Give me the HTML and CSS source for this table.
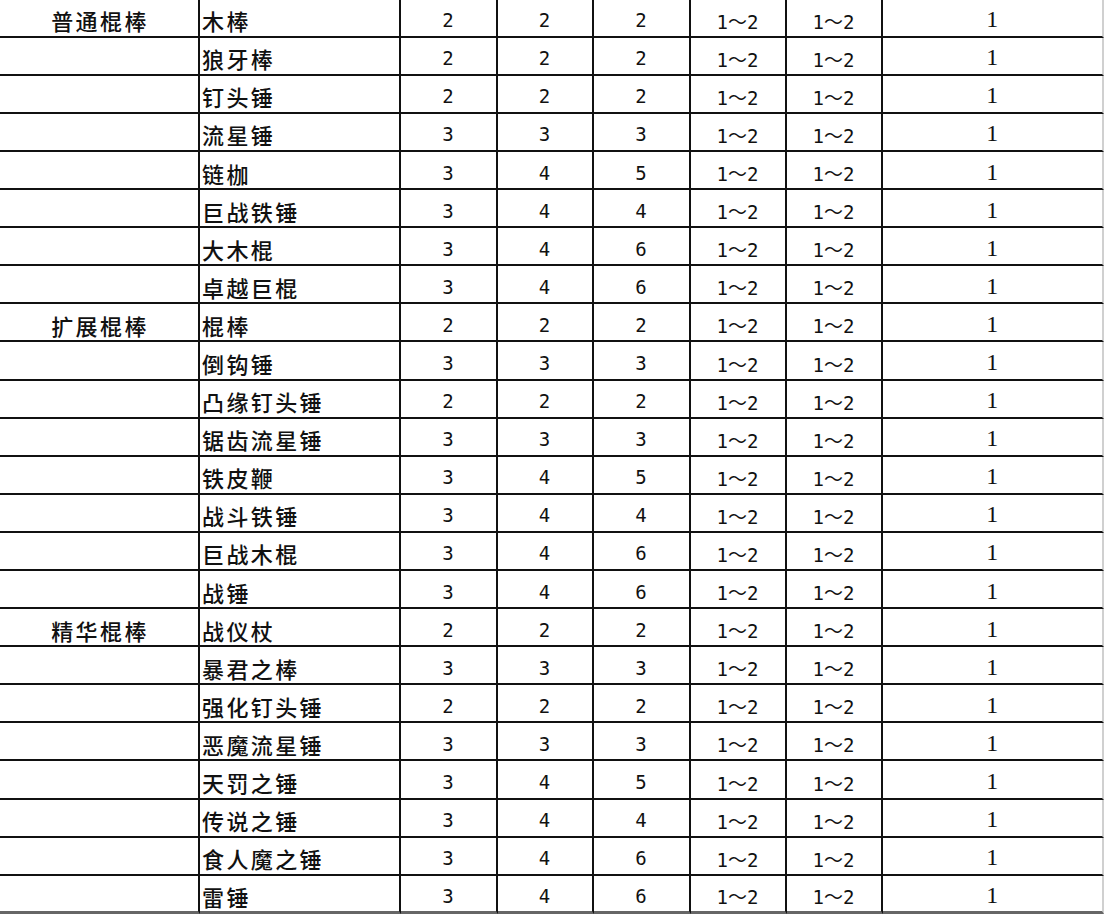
FILE: index.html
```html
<!DOCTYPE html>
<html lang="zh-CN">
<head>
<meta charset="utf-8">
<title>棍棒</title>
<link rel="stylesheet" href="styles.css">
</head>
<body>
<div class="sheet">
  <div class="c cat">普通棍棒</div><div class="c name">木棒</div><div class="c num">2</div><div class="c num">2</div><div class="c num">2</div><div class="c num">1～2</div><div class="c num">1～2</div><div class="c num last">1</div>
  <div class="c cat"></div><div class="c name">狼牙棒</div><div class="c num">2</div><div class="c num">2</div><div class="c num">2</div><div class="c num">1～2</div><div class="c num">1～2</div><div class="c num last">1</div>
  <div class="c cat"></div><div class="c name">钉头锤</div><div class="c num">2</div><div class="c num">2</div><div class="c num">2</div><div class="c num">1～2</div><div class="c num">1～2</div><div class="c num last">1</div>
  <div class="c cat"></div><div class="c name">流星锤</div><div class="c num">3</div><div class="c num">3</div><div class="c num">3</div><div class="c num">1～2</div><div class="c num">1～2</div><div class="c num last">1</div>
  <div class="c cat"></div><div class="c name">链枷</div><div class="c num">3</div><div class="c num">4</div><div class="c num">5</div><div class="c num">1～2</div><div class="c num">1～2</div><div class="c num last">1</div>
  <div class="c cat"></div><div class="c name">巨战铁锤</div><div class="c num">3</div><div class="c num">4</div><div class="c num">4</div><div class="c num">1～2</div><div class="c num">1～2</div><div class="c num last">1</div>
  <div class="c cat"></div><div class="c name">大木棍</div><div class="c num">3</div><div class="c num">4</div><div class="c num">6</div><div class="c num">1～2</div><div class="c num">1～2</div><div class="c num last">1</div>
  <div class="c cat"></div><div class="c name">卓越巨棍</div><div class="c num">3</div><div class="c num">4</div><div class="c num">6</div><div class="c num">1～2</div><div class="c num">1～2</div><div class="c num last">1</div>
  <div class="c cat">扩展棍棒</div><div class="c name">棍棒</div><div class="c num">2</div><div class="c num">2</div><div class="c num">2</div><div class="c num">1～2</div><div class="c num">1～2</div><div class="c num last">1</div>
  <div class="c cat"></div><div class="c name">倒钩锤</div><div class="c num">3</div><div class="c num">3</div><div class="c num">3</div><div class="c num">1～2</div><div class="c num">1～2</div><div class="c num last">1</div>
  <div class="c cat"></div><div class="c name">凸缘钉头锤</div><div class="c num">2</div><div class="c num">2</div><div class="c num">2</div><div class="c num">1～2</div><div class="c num">1～2</div><div class="c num last">1</div>
  <div class="c cat"></div><div class="c name">锯齿流星锤</div><div class="c num">3</div><div class="c num">3</div><div class="c num">3</div><div class="c num">1～2</div><div class="c num">1～2</div><div class="c num last">1</div>
  <div class="c cat"></div><div class="c name">铁皮鞭</div><div class="c num">3</div><div class="c num">4</div><div class="c num">5</div><div class="c num">1～2</div><div class="c num">1～2</div><div class="c num last">1</div>
  <div class="c cat"></div><div class="c name">战斗铁锤</div><div class="c num">3</div><div class="c num">4</div><div class="c num">4</div><div class="c num">1～2</div><div class="c num">1～2</div><div class="c num last">1</div>
  <div class="c cat"></div><div class="c name">巨战木棍</div><div class="c num">3</div><div class="c num">4</div><div class="c num">6</div><div class="c num">1～2</div><div class="c num">1～2</div><div class="c num last">1</div>
  <div class="c cat"></div><div class="c name">战锤</div><div class="c num">3</div><div class="c num">4</div><div class="c num">6</div><div class="c num">1～2</div><div class="c num">1～2</div><div class="c num last">1</div>
  <div class="c cat">精华棍棒</div><div class="c name">战仪杖</div><div class="c num">2</div><div class="c num">2</div><div class="c num">2</div><div class="c num">1～2</div><div class="c num">1～2</div><div class="c num last">1</div>
  <div class="c cat"></div><div class="c name">暴君之棒</div><div class="c num">3</div><div class="c num">3</div><div class="c num">3</div><div class="c num">1～2</div><div class="c num">1～2</div><div class="c num last">1</div>
  <div class="c cat"></div><div class="c name">强化钉头锤</div><div class="c num">2</div><div class="c num">2</div><div class="c num">2</div><div class="c num">1～2</div><div class="c num">1～2</div><div class="c num last">1</div>
  <div class="c cat"></div><div class="c name">恶魔流星锤</div><div class="c num">3</div><div class="c num">3</div><div class="c num">3</div><div class="c num">1～2</div><div class="c num">1～2</div><div class="c num last">1</div>
  <div class="c cat"></div><div class="c name">天罚之锤</div><div class="c num">3</div><div class="c num">4</div><div class="c num">5</div><div class="c num">1～2</div><div class="c num">1～2</div><div class="c num last">1</div>
  <div class="c cat"></div><div class="c name">传说之锤</div><div class="c num">3</div><div class="c num">4</div><div class="c num">4</div><div class="c num">1～2</div><div class="c num">1～2</div><div class="c num last">1</div>
  <div class="c cat"></div><div class="c name">食人魔之锤</div><div class="c num">3</div><div class="c num">4</div><div class="c num">6</div><div class="c num">1～2</div><div class="c num">1～2</div><div class="c num last">1</div>
  <div class="c cat bottom"></div><div class="c name bottom">雷锤</div><div class="c num bottom">3</div><div class="c num bottom">4</div><div class="c num bottom">6</div><div class="c num bottom">1～2</div><div class="c num bottom">1～2</div><div class="c num last bottom">1</div>
</div>
</body>
</html>
```
FILE: styles.css
```css
html, body {
  margin: 0;
  padding: 0;
  background: #fff;
  overflow: hidden;
}

.sheet {
  display: grid;
  grid-template-columns: 200px 200.5px 97px 96px 97px 96px 96px 221.5px;
  grid-auto-rows: 38.1px;
  margin-top: -0.4px;
  color: #111;
}

.c {
  box-sizing: border-box;
  border-right: 2px solid #111;
  border-bottom: 2px solid #111;
  display: flex;
  align-items: center;
  padding-top: 5px;
  white-space: nowrap;
  overflow: hidden;
}

.cat, .name {
  font-family: "Noto Sans CJK SC", "Noto Sans", sans-serif;
  font-size: 22px;
  font-weight: 500;
  letter-spacing: 2.4px;
}

.cat {
  justify-content: center;
  padding-left: 2px;
}

.name {
  padding-left: 2px;
}

.num {
  justify-content: center;
  font-family: "DejaVu Sans Mono", "Noto Sans CJK SC", monospace;
  font-size: 19px;
}

.last {
  border-right-color: #d0d0d0;
  font-family: "Liberation Serif", serif;
  font-size: 24px;
  padding-top: 4px;
}

.bottom {
  border-bottom: 3px solid #666;
}
```
